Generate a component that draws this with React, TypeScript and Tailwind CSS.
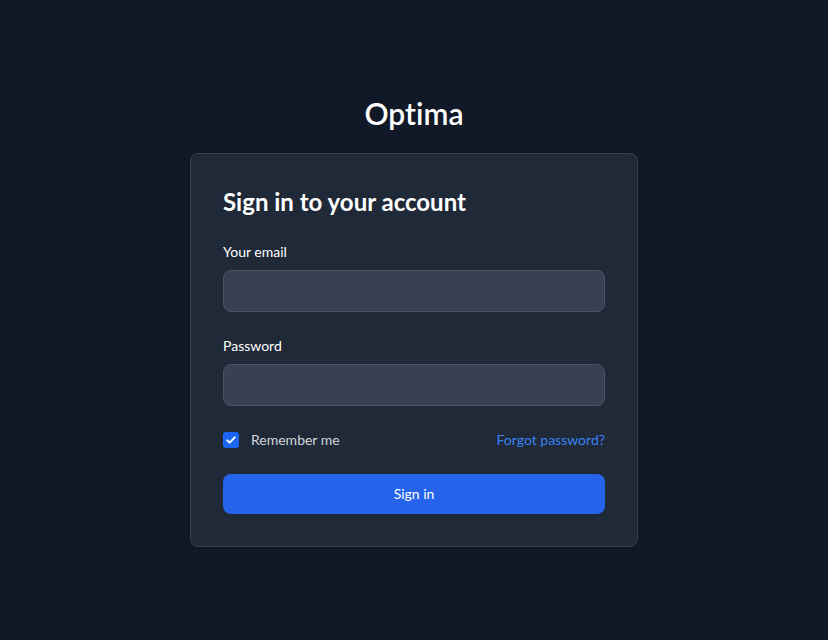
export default function App() {
  return (
    <section
      className="min-h-screen bg-[#111827] flex flex-col items-center justify-center px-6 [font-variant-ligatures:none]"
      style={{ fontFamily: 'Lato, "Noto Sans", sans-serif' }}
    >
      <a href="#" className="mt-1 mb-6 text-3xl leading-8 font-semibold text-white">
        Optima
      </a>
      <div className="w-full max-w-md bg-[#1f2937] border border-[#374151] rounded-lg shadow">
        <div className="p-8 flex flex-col gap-6">
          <h1 className="text-2xl font-bold text-white leading-8">Sign in to your account</h1>
          <form className="flex flex-col gap-6" onSubmit={(e) => e.preventDefault()}>
            <div>
              <label htmlFor="email" className="block mb-2 text-sm leading-5 text-white">
                Your email
              </label>
              <input
                id="email"
                type="email"
                className="block w-full p-2.5 text-sm text-white bg-[#374151] border border-[#4b5563] rounded-lg outline-none"
              />
            </div>
            <div>
              <label htmlFor="password" className="block mb-2 text-sm leading-5 text-white">
                Password
              </label>
              <input
                id="password"
                type="password"
                className="block w-full p-2.5 text-sm text-white bg-[#374151] border border-[#4b5563] rounded-lg outline-none"
              />
            </div>
            <div className="flex items-center justify-between">
              <label className="flex items-center">
                <span className="w-4 h-4 rounded-[3px] bg-[#1c64f2] flex items-center justify-center">
                  <svg viewBox="0 0 16 16" className="w-3 h-3" fill="none" stroke="white" strokeWidth="2.6" strokeLinecap="round" strokeLinejoin="round">
                    <path d="M3 8.5l3.2 3L13 4.5" />
                  </svg>
                </span>
                <span className="ml-3 text-sm text-[#d1d5db]">Remember me</span>
              </label>
              <a href="#" className="text-sm text-[#3b82f6]">
                Forgot password?
              </a>
            </div>
            <button
              type="submit"
              className="w-full h-10 text-sm text-white bg-[#2563eb] rounded-lg"
            >
              Sign in
            </button>
          </form>
        </div>
      </div>
    </section>
  );
}
